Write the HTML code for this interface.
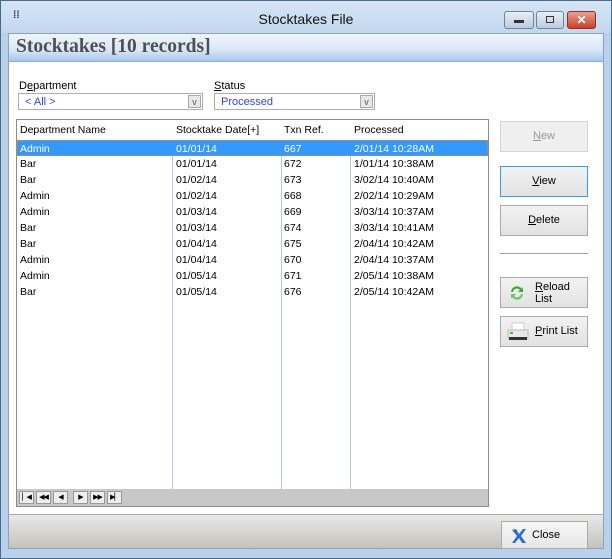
<!DOCTYPE html>
<html><head><style>
*{box-sizing:border-box;margin:0;padding:0}
body{width:612px;height:559px;overflow:hidden;font-family:"Liberation Sans",sans-serif;font-size:10.5px;color:#000;background:#fff}
.frame{position:absolute;left:0;top:0;width:612px;height:559px;background:#b9d1ea;border:1px solid #4a6a8a}
.title{position:absolute;left:0;top:0;width:610px;height:32px;background:linear-gradient(#d6e5f5,#c2d7ee)}
.title .t{position:absolute;left:0;width:100%;top:10px;text-align:center;font-size:14px;color:#111}
.wb{position:absolute;top:10px;height:18px;border:1px solid #6d84a0;border-radius:3px;background:linear-gradient(#e8eef6,#bccbdd)}
.inner{position:absolute;left:7px;top:32px;width:596px;height:516px;background:#fff;border:1px solid #8aa4c0}
.hdr{position:absolute;left:0;top:0;width:100%;height:28px;background:linear-gradient(#eef4fc,#d9e7f8 60%,#a9c6ea);border-bottom:1px solid #8fb0da}
.hdr span{position:absolute;left:7px;top:2px;font-family:"Liberation Serif",serif;font-weight:bold;font-size:19.5px;color:#505050}
.lbl{position:absolute;font-size:11px}
.cb{position:absolute;height:17px;border:1px solid #abadb3;background:#fff;color:#3344ee;padding:2px 6px;font-size:11px}
.cb i{position:absolute;right:1px;top:1px;width:13px;height:13px;border:1px solid #aaa;background:#e8e8e8;font-style:normal;color:#555;font-size:9px;text-align:center;line-height:12px}
.grid{position:absolute;left:7px;top:85px;width:473px;height:388px;border:1px solid #8c8c8c;background:#fff}
.row{position:absolute;left:0;width:471px;height:16px;line-height:16px}
.row span{position:absolute;top:0}
.vl{position:absolute;top:20px;width:1px;height:350px;background:#b5cbe3}
.nav{position:absolute;left:0;bottom:0;width:471px;height:17px;background:#c8c8c8}
.nb{position:absolute;top:2px;width:15px;height:13px;background:#eee;border:1px solid #999;font-size:7px;text-align:center;line-height:11px;letter-spacing:-1px}
.btn{position:absolute;left:491px;width:88px;height:31px;border:1px solid #acacac;background:linear-gradient(#f2f2f2,#e2e2e2);text-align:center;line-height:29px;font-size:11px}
.foot{position:absolute;left:0;top:480px;width:594px;height:34px;background:linear-gradient(#e9e9e9,#c6c2bc);border-top:1px solid #aaa}
</style></head><body>
<div class="frame">
<div class="title"><span style="position:absolute;left:12px;top:9px;color:#234;font-size:10px;font-weight:bold">⁞⁞</span><div class="t">Stocktakes File</div>
<div class="wb" style="left:503px;width:30px"><div style="margin:8px auto 0;width:10px;height:3px;background:#333"></div></div>
<div class="wb" style="left:535px;width:28px"><div style="margin:4px auto 0;width:8px;height:7px;border:1px solid #333"></div></div>
<div class="wb" style="left:566px;width:29px;background:linear-gradient(#e8a090,#c8402c);border-color:#8a3020;color:#fff;text-align:center;font-weight:bold;font-size:12px;line-height:16px">✕</div>
</div>
<div class="inner">
<div class="hdr"><span>Stocktakes [10 records]</span></div>
<div class="lbl" style="left:10px;top:46px">D<u>e</u>partment</div>
<div class="lbl" style="left:205px;top:46px"><u>S</u>tatus</div>
<div class="cb" style="left:9px;top:59px;width:185px">&lt; All &gt;<i>v</i></div>
<div class="cb" style="left:205px;top:59px;width:161px">Processed<i>v</i></div>
<div class="grid">
<div class="row" style="top:2px"><span style="left:3px">Department Name</span><span style="left:159px">Stocktake Date[+]</span><span style="left:267px">Txn Ref.</span><span style="left:337px">Processed</span></div>
<div class="vl" style="left:155px"></div><div class="vl" style="left:264px"></div><div class="vl" style="left:333px"></div>
<div class="row" style="top:20px;background:#3399ff;color:#fff;border:1px dotted #e08a30"><span style="left:2px">Admin</span><span style="left:158px">01/01/14</span><span style="left:266px">667</span><span style="left:336px">2/01/14 10:28AM</span></div>
<div class="row" style="top:36px"><span style="left:3px">Bar</span><span style="left:159px">01/01/14</span><span style="left:267px">672</span><span style="left:337px">1/01/14 10:38AM</span></div>
<div class="row" style="top:52px"><span style="left:3px">Bar</span><span style="left:159px">01/02/14</span><span style="left:267px">673</span><span style="left:337px">3/02/14 10:40AM</span></div>
<div class="row" style="top:68px"><span style="left:3px">Admin</span><span style="left:159px">01/02/14</span><span style="left:267px">668</span><span style="left:337px">2/02/14 10:29AM</span></div>
<div class="row" style="top:84px"><span style="left:3px">Admin</span><span style="left:159px">01/03/14</span><span style="left:267px">669</span><span style="left:337px">3/03/14 10:37AM</span></div>
<div class="row" style="top:100px"><span style="left:3px">Bar</span><span style="left:159px">01/03/14</span><span style="left:267px">674</span><span style="left:337px">3/03/14 10:41AM</span></div>
<div class="row" style="top:116px"><span style="left:3px">Bar</span><span style="left:159px">01/04/14</span><span style="left:267px">675</span><span style="left:337px">2/04/14 10:42AM</span></div>
<div class="row" style="top:132px"><span style="left:3px">Admin</span><span style="left:159px">01/04/14</span><span style="left:267px">670</span><span style="left:337px">2/04/14 10:37AM</span></div>
<div class="row" style="top:148px"><span style="left:3px">Admin</span><span style="left:159px">01/05/14</span><span style="left:267px">671</span><span style="left:337px">2/05/14 10:38AM</span></div>
<div class="row" style="top:164px"><span style="left:3px">Bar</span><span style="left:159px">01/05/14</span><span style="left:267px">676</span><span style="left:337px">2/05/14 10:42AM</span></div>
<div class="nav">
<div class="nb" style="left:2px">▏◀</div><div class="nb" style="left:19px">◀◀</div><div class="nb" style="left:36px">◀</div><div class="nb" style="left:56px">▶</div><div class="nb" style="left:73px">▶▶</div><div class="nb" style="left:90px">▶▏</div>
</div>
</div>
<div class="btn" style="top:87px;color:#999;background:#efefef;border-color:#d5d5d5"><u>N</u>ew</div>
<div class="btn" style="top:132px;border-color:#3c9be8"><u>V</u>iew</div>
<div class="btn" style="top:171px"><u>D</u>elete</div>
<div style="position:absolute;left:491px;top:219px;width:88px;height:1px;background:#a0a0a0"></div>
<div class="btn" style="top:243px;text-align:left;line-height:12px;padding:3px 0 0 34px"><u>R</u>eload<br>List
<svg style="position:absolute;left:8px;top:7px" width="16" height="16" viewBox="0 0 16 16"><path d="M2 7a6 6 0 0 1 11-3l1-2v5h-5l2-2a4 4 0 0 0-7 2z" fill="#3aa83a"/><path d="M14 9a6 6 0 0 1-11 3l-1 2v-5h5l-2 2a4 4 0 0 0 7-2z" fill="#6cc46c"/></svg></div>
<div class="btn" style="top:282px;text-align:left;padding-left:34px"><u>P</u>rint List
<svg style="position:absolute;left:6px;top:5px" width="22" height="20" viewBox="0 0 22 20"><rect x="5" y="1" width="12" height="7" fill="#fff" stroke="#ccc"/><rect x="1" y="8" width="20" height="8" fill="#e8e8e8" stroke="#bbb"/><rect x="3" y="10" width="3" height="2" fill="#2c2"/><rect x="2" y="15" width="18" height="3" fill="#333"/></svg></div>
<div class="foot">
<div style="position:absolute;left:492px;top:6px;width:87px;height:28px;border:1px solid #acacac;background:linear-gradient(#f6f6f6,#e6e6e6);line-height:26px;padding-left:30px;font-size:11px">Close
<svg style="position:absolute;left:8px;top:5px" width="18" height="18" viewBox="0 0 18 18"><path d="M2 3l4-1 3 5 4-5h3l-5 7 5 7h-4l-3-5-4 5H2l5-7z" fill="#2a6fd0"/></svg></div>
</div>
</div>
</div>
</body></html>
